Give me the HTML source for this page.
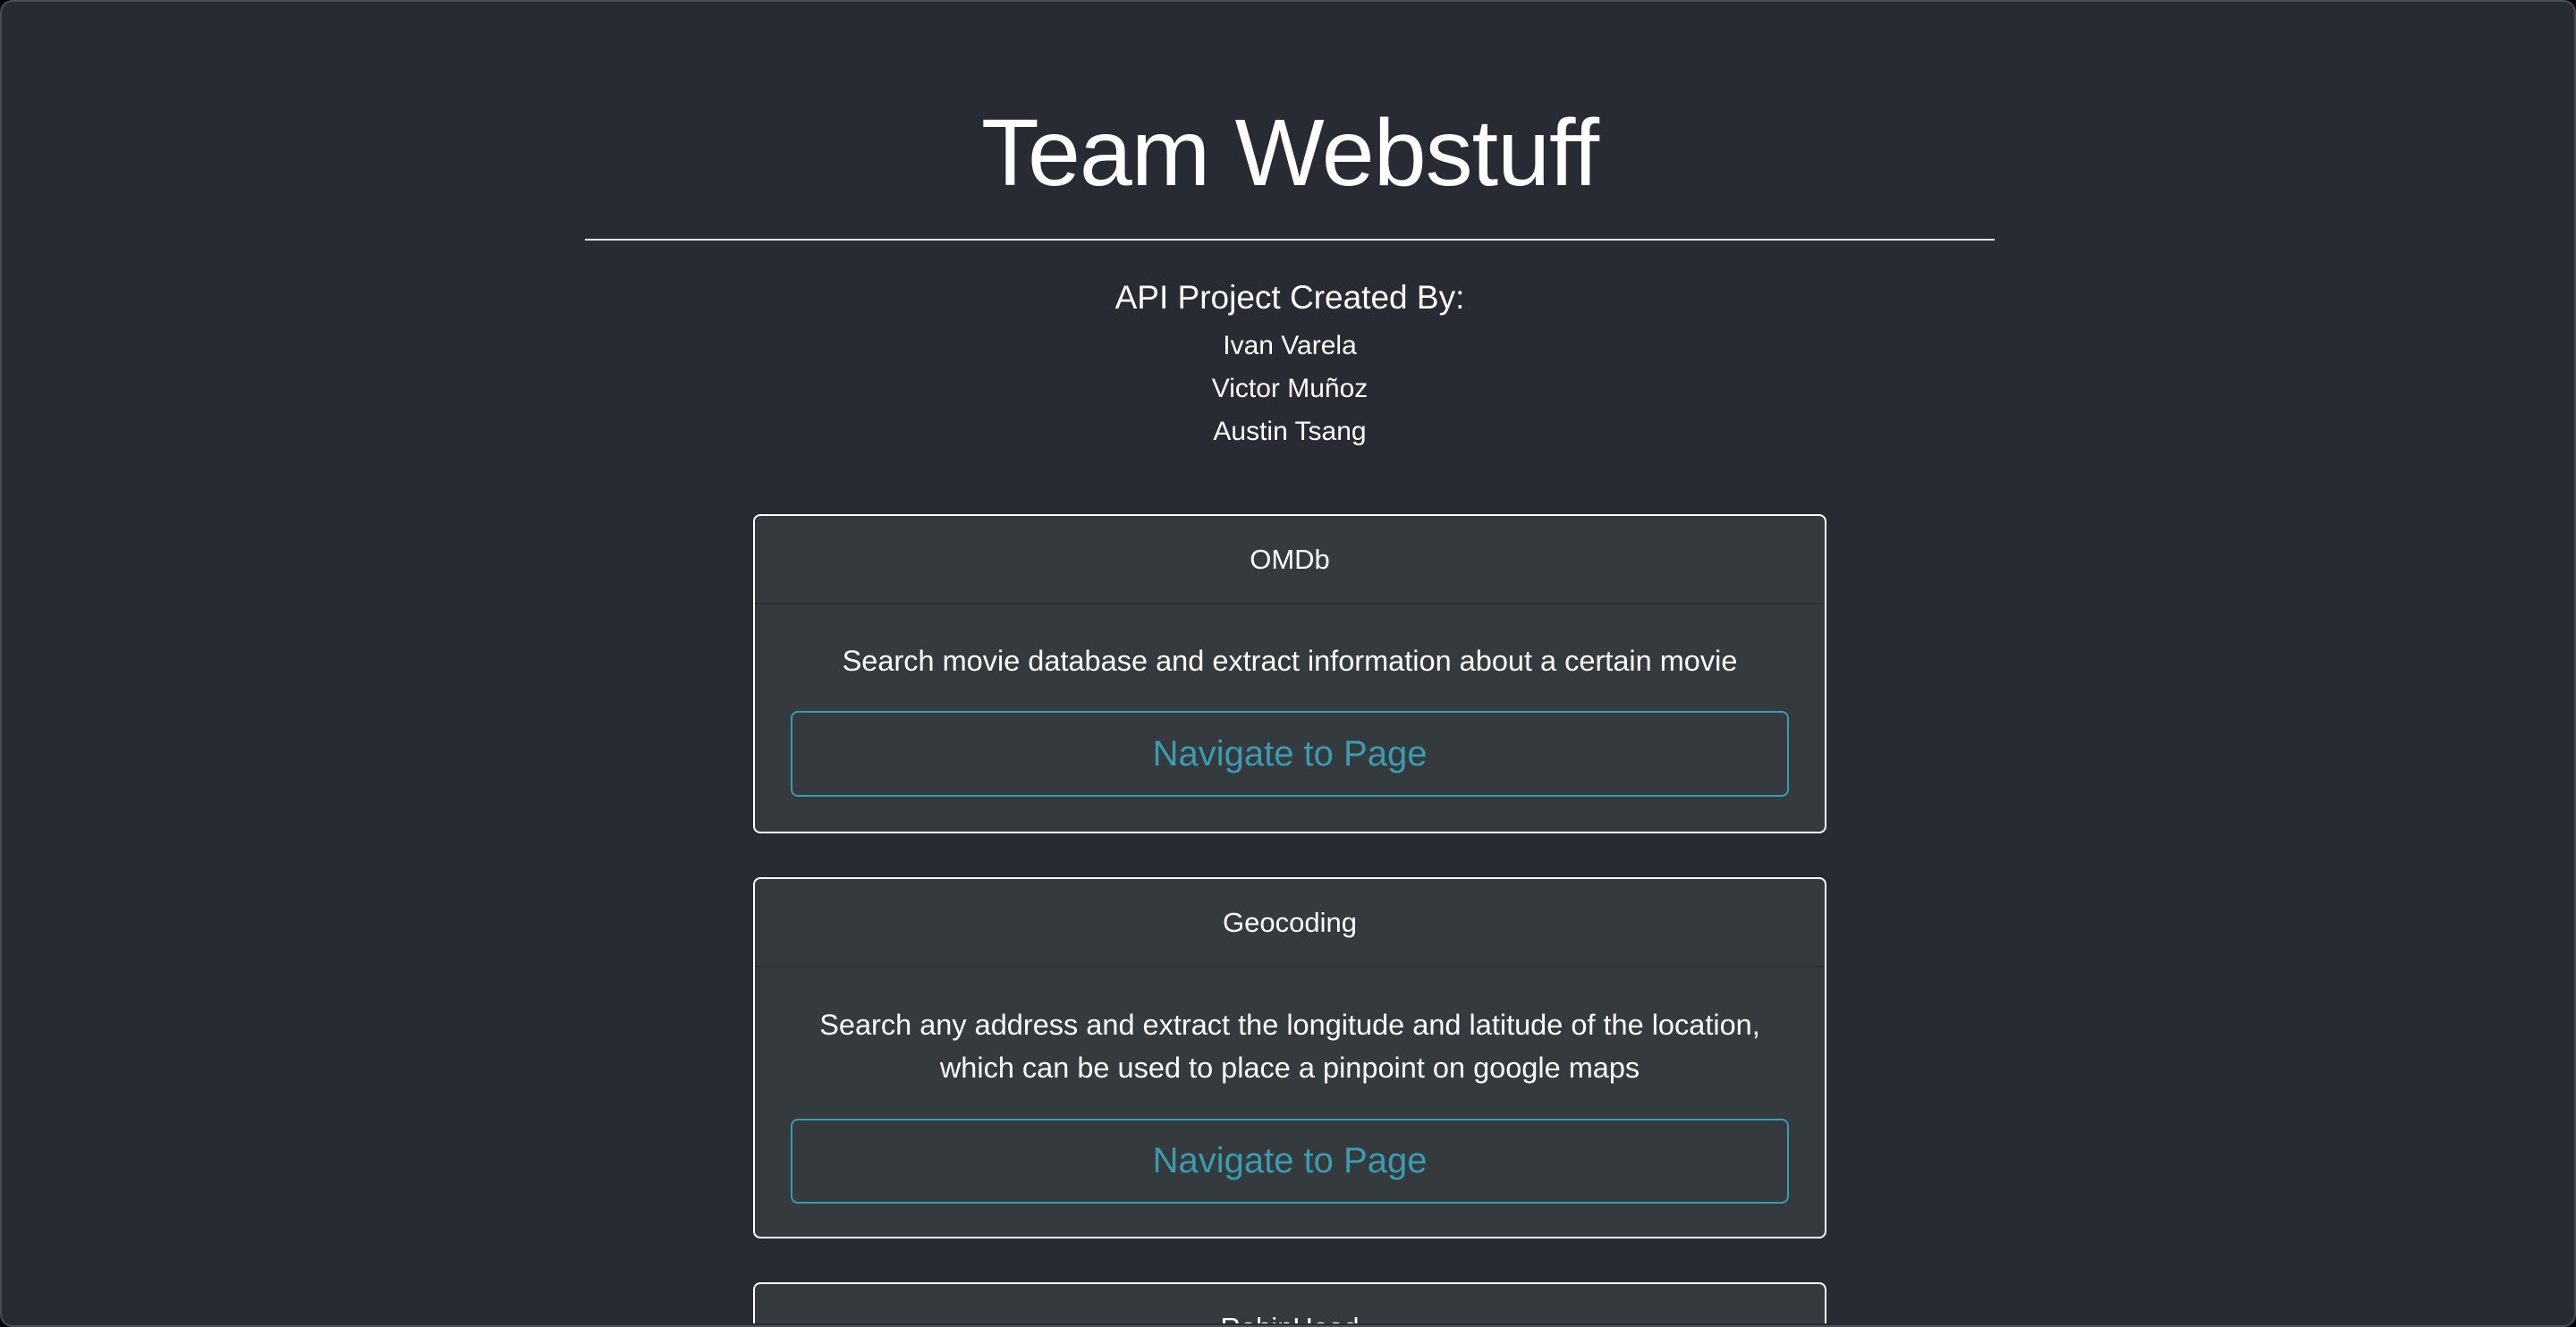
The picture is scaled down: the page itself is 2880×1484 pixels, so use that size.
<!DOCTYPE html>
<html><head><meta charset="utf-8"><style>
html,body{margin:0;padding:0;}
body{width:2880px;height:1484px;overflow:hidden;background:#000;font-family:"Liberation Sans",sans-serif;color:#fff;position:relative;}
.win{position:absolute;left:0;top:0;width:2876px;height:1480px;border:2px solid #4a4d55;border-radius:14px;background:#282b34;overflow:hidden;}
.c{position:absolute;left:0;width:2880px;text-align:center;white-space:nowrap;}
.hr{position:absolute;left:652px;width:1576px;top:265px;height:2px;background:#e6e6e6;}
.card{position:absolute;left:840px;width:1196px;border:2px solid #fff;border-radius:8px;background:#343a3e;overflow:hidden;}
.hd{height:97px;border-bottom:2px solid #2e3236;text-align:center;line-height:97px;font-size:31px;}
.desc{text-align:center;font-size:32.5px;line-height:48px;}
.btn{position:absolute;left:40px;width:1112px;border:2px solid #3d9bb0;border-radius:8px;color:#3d9bb0;text-align:center;font-size:40px;}
</style></head><body>
<div class="win">
<div class="c" style="top:104px;font-size:106px;line-height:130px;font-weight:300;letter-spacing:-1px;">Team Webstuff</div>
<div class="hr"></div>
<div class="c" style="top:306px;font-size:37px;line-height:50px;font-weight:300;">API Project Created By:</div>
<div class="c" style="top:361px;font-size:30px;line-height:48px;">Ivan Varela<br>Victor Muñoz<br>Austin Tsang</div>

<div class="card" style="top:573px;height:353px;">
<div class="hd">OMDb</div>
<div class="desc" style="margin-top:39px;">Search movie database and extract information about a certain movie</div>
<div class="btn" style="top:218px;height:92px;line-height:92px;">Navigate to Page</div>
</div>

<div class="card" style="top:979px;height:400px;">
<div class="hd">Geocoding</div>
<div class="desc" style="margin-top:40px;">Search any address and extract the longitude and latitude of the location,<br>which can be used to place a pinpoint on google maps</div>
<div class="btn" style="top:268px;height:91px;line-height:91px;">Navigate to Page</div>
</div>

<div class="card" style="top:1432px;height:44px;border-bottom:none;border-radius:8px 8px 0 0;">
<div class="hd">RobinHood</div>
</div>
</div>
</body></html>
